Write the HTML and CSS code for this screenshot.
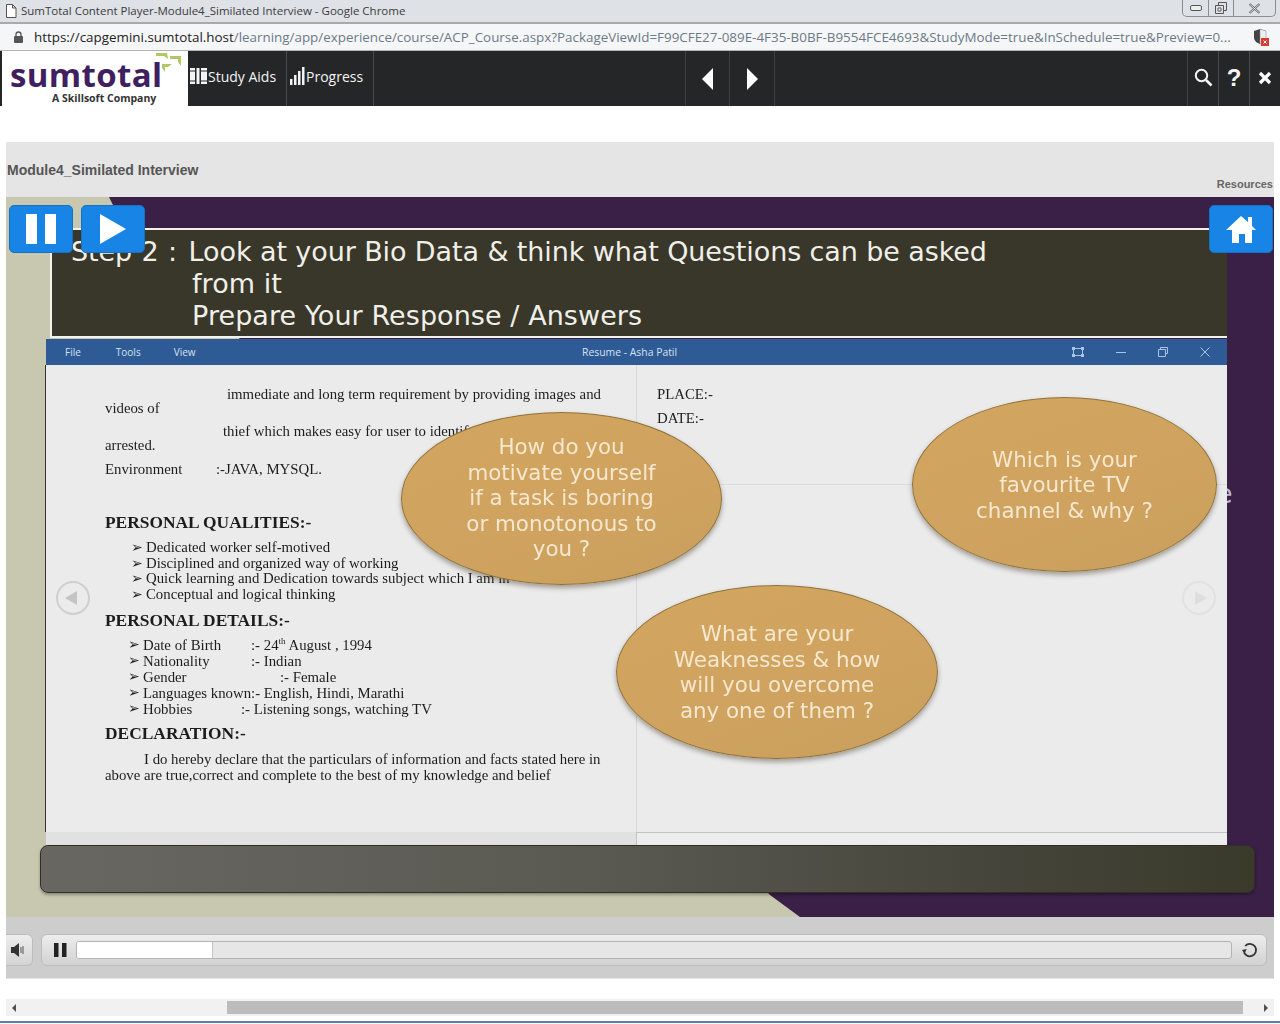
FILE: index.html
```html
<!DOCTYPE html>
<html lang="en">
<head>
  <meta charset="UTF-8">
  <title>SumTotal Content Player-Module4_Similated Interview</title>
  <link rel="stylesheet" href="styles.css">
</head>
<body>
  <div class="titlebar">
    <svg class="page-icon" width="12" height="14" viewBox="0 0 12 14"><path d="M1.500.5h6l3.500 3.500v9.500h-9.500z M7.500.5v3.500h3.500" fill="#fff" stroke="#555"/></svg>
    <span class="titlebar-text">SumTotal Content Player-Module4_Similated Interview - Google Chrome</span>
    <div class="win-buttons">
      <span class="win-btn win-min"><svg width="12" height="6" viewBox="0 0 12 6"><rect x=".5" y=".5" width="11" height="5" rx="1.500" fill="#eee" stroke="#555"/></svg></span>
      <span class="win-btn win-max"><svg width="12" height="12" viewBox="0 0 12 12"><path d="M3.500.5h8v8h-8z" fill="none" stroke="#555"/><path d="M.5 3.500h8v8h-8z" fill="#dee1e6" stroke="#555"/><path d="M3 6h3v3h-3z" fill="#fff" stroke="#555"/></svg></span>
      <span class="win-btn win-close"><svg width="13" height="11" viewBox="0 0 13 11"><path d="M1.500 1l10 9M11.500 1l-10 9" stroke="#666" stroke-width="2.200" fill="none"/><path d="M1.500 1l10 9M11.500 1l-10 9" stroke="#f2f2f2" stroke-width=".8" fill="none"/></svg></span>
    </div>
  </div>

  <div class="addressbar">
    <svg class="lock" width="9" height="12" viewBox="0 0 9 12"><path d="M2 5V3.500a2.500 2.500 0 0 1 5 0V5" fill="none" stroke="#555" stroke-width="1.300"/><rect y="5" width="9" height="7" rx="1" fill="#555"/></svg>
    <span class="url"><span class="url-host">https://capgemini.sumtotal.host</span>/learning/app/experience/course/ACP_Course.aspx?PackageViewId=F99CFE27-089E-4F35-B0BF-B9554FCE4693&amp;StudyMode=true&amp;InSchedule=true&amp;Preview=0...</span>
    <svg class="shield" width="16" height="18" viewBox="0 0 16 18"><path d="M1 3l6-2 6 2v6c0 4-3 6-6 7-3-1-6-3-6-7z" fill="#444"/><path d="M7 1l6 2v6c0 4-3 6-6 7z" fill="#eee" stroke="#888" stroke-width=".5"/><rect x="8" y="10" width="8" height="8" fill="#d93a32"/><path d="M10.500 12.500l3 3M13.500 12.500l-3 3" stroke="#fff"/></svg>
  </div>

  <nav class="topnav">
    <div class="logo">
      <div class="logo-name">sumtotal</div>
      <svg class="logo-mark" width="28" height="20" viewBox="0 0 28 20"><path d="M1 0h11l1 6-4-3H1zM15 3h11v10l-3-4V6h-8zM7 11h10l-4 3h-3v5l-3-4z" fill="#b0c965"/></svg>
      <div class="logo-sub">A Skillsoft Company</div>
    </div>
    <a class="nav-item nav-study">
      <svg width="18" height="18" viewBox="0 0 18 18"><path d="M0 1h5v16H0zM6.500 1h3v16h-3zM11 1h6v16h-6z" fill="#f4f4f4"/><path d="M0 4h5M0 14h5M11 4h6M11 14h6" stroke="#252628"/></svg>
      Study Aids
    </a>
    <a class="nav-item nav-progress">
      <svg width="15" height="18" viewBox="0 0 15 18"><path d="M0 12h2.500v6H0zM4 8h2.500v10H4zM8 4h2.500v14H8zM12 0h2.500v18H12z" fill="#f4f4f4"/></svg>
      Progress
    </a>
    <div class="nav-spacer"></div>
    <a class="nav-arrow nav-arrow-first"><svg width="12" height="22" viewBox="0 0 12 22"><path d="M11 0v22L0 11z" fill="#fff"/></svg></a>
    <a class="nav-arrow"><svg width="12" height="22" viewBox="0 0 12 22"><path d="M1 0v22l11-11z" fill="#fff"/></svg></a>
    <div class="nav-spacer nav-spacer-right"></div>
    <a class="nav-tool"><svg width="19" height="19" viewBox="0 0 19 19"><circle cx="7.500" cy="7.500" r="5.700" fill="none" stroke="#f4f4f4" stroke-width="2"/><path d="M12 12l5.500 5.500" stroke="#f4f4f4" stroke-width="2.600"/></svg></a>
    <a class="nav-tool nav-help">?</a>
    <a class="nav-tool"><svg width="14" height="14" viewBox="0 0 14 14"><path d="M2 2l10 10M12 2L2 12" stroke="#fff" stroke-width="3.200"/></svg></a>
  </nav>

  <main class="player">
    <header class="module-head">
      <h1 class="module-title">Module4_Similated Interview</h1>
      <a class="resources">Resources</a>
    </header>

    <section class="slide">
      <div class="slide-beige"></div>

      <a class="blue-btn btn-pause"><svg width="32" height="30" viewBox="0 0 32 30"><path d="M1 0h11v30H1zM20 0h11v30H20z" fill="#fff"/></svg></a>
      <a class="blue-btn btn-play"><svg width="26" height="30" viewBox="0 0 26 30"><path d="M0 0l26 15L0 30z" fill="#fff"/></svg></a>
      <a class="blue-btn btn-home"><svg width="30" height="27" viewBox="0 0 30 27"><path d="M15 0l7 6V1h4v9l4 4h-4v13h-7v-9h-6v9H6V14H0z" fill="#fff"/></svg></a>

      <div class="step-panel">
        <p class="step-line step-first"><span class="step-no">Step 2 :</span> Look at your Bio Data &amp; think what Questions can be asked</p>
        <p class="step-line step-indent">from it</p>
        <p class="step-line step-indent">Prepare Your Response / Answers</p>
      </div>

      <div class="resume-window">
        <div class="resume-bar">
          <div class="resume-menu"><span>File</span><span>Tools</span><span>View</span></div>
          <div class="resume-title">Resume - Asha Patil</div>
          <div class="resume-ctrls">
            <svg width="12" height="10" viewBox="0 0 12 10"><path d="M1.500 1.500h9v7h-9z" fill="none" stroke="#a9c4e6"/><path d="M0 0h3v3H0zM9 0h3v3H9zM0 7h3v3H0zM9 7h3v3H9z" fill="#a9c4e6"/></svg>
            <svg width="10" height="10" viewBox="0 0 10 10"><path d="M0 5.500h10" stroke="#a9c4e6"/></svg>
            <svg width="10" height="10" viewBox="0 0 10 10"><path d="M2.500 2V.5h7v6H8M.5 2.500h7v7h-7z" fill="none" stroke="#a9c4e6"/></svg>
            <svg width="10" height="10" viewBox="0 0 10 10"><path d="M.5.5l9 9M9.500.5l-9 9" stroke="#a9c4e6"/></svg>
          </div>
        </div>

        <div class="resume-body">
          <div class="resume-left">
            <p class="rline rline-first indent-122">immediate and long term requirement by providing images and</p>
            <p class="rline">videos of</p>
            <p class="rline gap-9 indent-118">thief which makes easy for user to identify</p>
            <p class="rline">arrested.</p>
            <p class="rline gap-10"><span class="tab-111">Environment</span>:-JAVA, MYSQL.</p>
            <h3 class="rhead gap-quality">PERSONAL QUALITIES:-</h3>
            <ul class="rlist rlist-wide gap-list1">
              <li>Dedicated worker self-motived</li>
              <li>Disciplined and organized way of working</li>
              <li>Quick learning and Dedication towards subject which I am in</li>
              <li>Conceptual and logical thinking</li>
            </ul>
            <h3 class="rhead gap-details">PERSONAL DETAILS:-</h3>
            <ul class="rlist gap-list2">
              <li><span class="tab-108">Date of Birth</span>:- 24<sup>th</sup> August , 1994</li>
              <li><span class="tab-108">Nationality</span>:- Indian</li>
              <li><span class="tab-137">Gender</span>:- Female</li>
              <li>Languages known:- English, Hindi, Marathi</li>
              <li><span class="tab-98">Hobbies</span>:- Listening songs, watching TV</li>
            </ul>
            <h3 class="rhead gap-declare">DECLARATION:-</h3>
            <p class="rline gap-declare-text indent-39">I do hereby declare that the particulars of information and facts stated here in</p>
            <p class="rline gap-last">above are true,correct and complete to the best of my knowledge and belief</p>
          </div>
          <div class="resume-right">
            <p class="rline rline-first">PLACE:-</p>
            <p class="rline gap-date">DATE:-</p>
            <div class="right-rule"></div>
          </div>

          <a class="page-arrow page-prev"><svg width="12" height="14" viewBox="0 0 12 14"><path d="M12 0v14L0 7z" fill="#c4c4c4"/></svg></a>
          <a class="page-arrow page-next"><svg width="12" height="14" viewBox="0 0 12 14"><path d="M0 0v14l12-7z" fill="#dedede"/></svg></a>
        </div>
        <div class="resume-foot"><div class="foot-left"></div><div class="foot-right"></div></div>

        <div class="bubble bubble-motivate">How do you<br>motivate yourself<br>if a task is boring<br>or monotonous to<br>you ?</div>
        <div class="bubble bubble-tv">Which is your<br>favourite TV<br>channel &amp; why ?</div>
        <div class="bubble bubble-weak">What are your<br>Weaknesses &amp; how<br>will you overcome<br>any one of them ?</div>
        <div class="stray"><span>e</span></div>
      </div>

      <div class="caption-bar"></div>
    </section>

    <div class="controls">
      <a class="ctrl-volume"><svg width="13" height="14" viewBox="0 0 13 14"><path d="M0 4h3l5-4v14l-5-4H0z" fill="#333"/><path d="M10 4v6M12 3v8" stroke="#555"/></svg></a>
      <div class="ctrl-main">
        <svg class="ctrl-pause" width="13" height="14" viewBox="0 0 13 14"><path d="M0 0h4.500v14H0zM8 0h4.500v14H8z" fill="#222"/></svg>
        <div class="track"><div class="track-fill"></div></div>
        <svg class="ctrl-replay" width="16" height="16" viewBox="0 0 16 16"><path d="M3.200 4A6.200 6.200 0 1 1 1.700 8.500" fill="none" stroke="#333" stroke-width="1.800"/><path d="M0 7.500h5L2.500 11z" fill="#333" transform="rotate(-10 2.500 9)"/></svg>
      </div>
    </div>
  </main>

  <div class="hscroll">
    <span class="hscroll-arrow hscroll-left"></span>
    <div class="hscroll-track"><div class="hscroll-thumb"></div></div>
    <span class="hscroll-arrow hscroll-right"></span>
  </div>
  <div class="taskbar-edge"></div>
</body>
</html>
```

FILE: styles.css
```css
html, body {
  margin: 0;
  height: 1024px;
  overflow: hidden;
  background: white;
}

body {
  font-family: "Open Sans", sans-serif;
}

p, h1, h3, ul {
  margin: 0;
  padding: 0;
}

/* browser window */
.titlebar {
  height: 22px;
  background: #dee1e6;
  border-bottom: 2px solid #a9a9a9;
  display: flex;
  align-items: center;
  padding-left: 5px;
  font-size: 11.500px;
  color: #3c3c3c;
}

.titlebar-text {
  margin-left: 4px;
  margin-bottom: 2px;
}

.win-buttons {
  margin-left: auto;
  margin-right: 4px;
  align-self: flex-start;
  display: flex;
  height: 16px;
  border: 1px solid #8a8d91;
  border-top: none;
  border-radius: 0 0 5px 5px;
}

.win-btn {
  display: flex;
  align-items: center;
  justify-content: center;
}

.win-min { width: 25px; border-right: 1px solid #8a8d91; }
.win-max { width: 24px; border-right: 1px solid #8a8d91; }
.win-close { width: 41px; }

.addressbar {
  height: 26px;
  background: #f5f6f7;
  border-bottom: 1px solid #b5b5b5;
  display: flex;
  align-items: center;
  padding-left: 14px;
  font-size: 13.400px;
  color: #6c7a88;
}

.lock, .shield {
  flex-shrink: 0;
}

.url {
  margin-left: 11px;
  padding-bottom: 1px;
  white-space: nowrap;
}

.url-host {
  color: #222;
}

.shield {
  margin-left: auto;
  margin-right: 11px;
}

/* app nav */
.topnav {
  height: 55px;
  background: #252628;
  display: flex;
  color: #f4f4f4;
  font-size: 14px;
}

.logo {
  width: 186px;
  margin-left: 2px;
  background: white;
  position: relative;
}

.logo-name {
  margin: 7px 0 0 8px;
  font-weight: 700;
  font-size: 33px;
  line-height: 34px;
  letter-spacing: 0.350px;
  color: #3f1f5f;
}

.logo-mark {
  position: absolute;
  left: 153px;
  top: 2px;
}

.logo-sub {
  margin-left: 50px;
  font-size: 10.500px;
  line-height: 13px;
  font-weight: 700;
  color: #333;
  white-space: nowrap;
}

.nav-item {
  display: flex;
  align-items: center;
  border-right: 1px solid #4a4b4d;
  padding-bottom: 5px;
  box-sizing: border-box;
}

.nav-study { width: 99px; padding-left: 2px; }
.nav-progress { width: 87px; padding-left: 3px; gap: 1px; }

.nav-spacer {
  width: 311px;
  border-right: 1px solid #3f4044;
}

.nav-spacer-right {
  width: 412px;
  border-right: 1px solid #3f4044;
}

.nav-arrow {
  width: 44px;
  display: flex;
  align-items: center;
  justify-content: center;
  border-right: 1px solid #3f4044;
}

.nav-arrow-first {
  padding-left: 1px;
  box-sizing: border-box;
}

.nav-tool {
  width: 30px;
  display: flex;
  align-items: center;
  justify-content: center;
  border-right: 1px solid #4a4b4d;
  padding-bottom: 2px;
}

.nav-tool:last-child {
  border-right: none;
}

.nav-help {
  font-family: "Liberation Sans", sans-serif;
  font-size: 24px;
  font-weight: 700;
}

/* player */
.player {
  margin: 36px 6px 0;
}

.module-head {
  height: 55px;
  background: #e5e5e5;
  position: relative;
  color: #555;
  font-family: "Liberation Sans", sans-serif;
}

.module-title {
  padding: 20px 0 0 1px;
  font-size: 14px;
  font-weight: 700;
}

.resources {
  position: absolute;
  right: 1px;
  bottom: 7px;
  font-size: 11px;
  font-weight: 700;
  color: #666;
}

.slide {
  height: 720px;
  background: #3a1f47;
  position: relative;
  padding: 31px 47px 0 40px;
  box-sizing: border-box;
}

.slide-beige {
  position: absolute;
  inset: 0;
  background: #c8c7b0;
  clip-path: polygon(0 0, 103px 0, 108px 10px, 764px 698px, 794px 720px, 0 720px);
}

.blue-btn {
  position: absolute;
  top: 8px;
  width: 64px;
  height: 48px;
  background: #1885e6;
  border: 1px solid #1571c4;
  border-radius: 5px;
  box-sizing: border-box;
  display: flex;
  align-items: center;
  justify-content: center;
  z-index: 3;
}

.btn-pause { left: 3px; }
.btn-play { left: 75px; }
.btn-home { right: 1px; }

.step-panel {
  position: relative;
  height: 110px;
  margin-left: 4px;
  box-sizing: border-box;
  background: #38372a;
  border: 2px solid #f2f1ea;
  border-right: none;
  padding: 6px 0 0 19px;
  font-family: "DejaVu Sans", sans-serif;
  font-size: 27px;
  line-height: 32px;
  color: #f0efe8;
  white-space: nowrap;
}

.step-first {
  letter-spacing: -0.100px;
}

.step-no {
  margin-right: 3px;
  word-spacing: 1px;
}

.step-indent {
  padding-left: 121px;
  letter-spacing: 0.070px;
}

.resume-window {
  position: relative;
  height: 506px;
  margin-top: 1px;
  background: #ebebec;
  font-family: "Liberation Serif", serif;
  color: #1c1c1c;
}

.resume-bar {
  height: 26px;
  background: #2e5a96;
  display: flex;
  align-items: center;
  justify-content: space-between;
  position: relative;
  font-family: "Open Sans", sans-serif;
  font-size: 10px;
  color: #d6e2f2;
}

.resume-menu {
  display: flex;
  padding-left: 19px;
  gap: 35px;
}

.resume-menu span:last-child {
  margin-left: -2px;
}

.resume-title {
  position: absolute;
  left: 536px;
  font-size: 10.400px;
}

.resume-ctrls {
  display: flex;
  gap: 32px;
  padding-right: 17px;
  align-items: center;
}

.resume-body {
  height: 467px;
  display: flex;
  position: relative;
  box-shadow: -1px 0 0 #333;
}

.resume-left {
  width: 591px;
  padding-left: 59px;
  border-right: 1px solid #d8d8da;
  white-space: nowrap;
  box-sizing: border-box;
  overflow: hidden;
  filter: blur(0.3px);
}

.resume-right {
  flex: 1;
  padding-left: 20px;
  filter: blur(0.3px);
}

.right-rule {
  height: 1px;
  margin: 59px 0 0 -20px;
  background: #dcdcde;
}

.rline {
  font-size: 14.800px;
  line-height: 14px;
}

.rline-first { margin-top: 22px; }
.gap-9 { margin-top: 9px; }
.gap-10 { margin-top: 10px; }
.gap-date { margin-top: 10px; }
.gap-last { margin-top: 2px; }
.indent-122 { padding-left: 122px; }
.indent-118 { padding-left: 118px; }
.indent-39 { padding-left: 39px; }

.rhead {
  font-size: 17.400px;
  line-height: 18px;
  font-weight: 700;
}

.gap-quality { margin-top: 37px; }
.gap-details { margin-top: 8px; }
.gap-declare { margin-top: 7px; }
.gap-declare-text { margin-top: 10px; }
.gap-list1 { margin-top: 9px; }
.gap-list2 { margin-top: 8px; }

.rlist {
  list-style: none;
  padding-left: 38px;
  font-size: 14.800px;
  line-height: 16px;
}

.rlist-wide {
  padding-left: 41px;
  line-height: 15.700px;
}

.rlist li {
  position: relative;
}

.rlist li::before {
  content: "➢";
  position: absolute;
  left: -15px;
  font-size: 14px;
}

.rlist sup {
  font-size: 9px;
  line-height: 0;
}

.tab-111, .tab-108, .tab-137, .tab-98 {
  display: inline-block;
}

.tab-111 { width: 111px; }
.tab-108 { width: 108px; }
.tab-137 { width: 137px; }
.tab-98 { width: 98px; }

.page-arrow {
  position: absolute;
  top: 216px;
  width: 34px;
  height: 34px;
  box-sizing: border-box;
  border-radius: 50%;
  border: 2px solid #cfcfcf;
  display: flex;
  align-items: center;
  justify-content: center;
}

.page-prev { left: 10px; }
.page-prev svg { margin-right: 4px; }
.page-next { right: 11px; border-color: #e2e2e2; }
.page-next svg { margin-left: 4px; }

.resume-foot {
  height: 13px;
  display: flex;
}

.foot-left {
  width: 590px;
  background: #e1e1e2;
}

.foot-right {
  flex: 1;
  background: #ededee;
  border-top: 1px solid #c2c2c2;
  border-left: 1px solid #c2c2c2;
}

.bubble {
  position: absolute;
  border-radius: 50%;
  background: linear-gradient(160deg, #d2a660 0%, #cfa35f 60%, #c99d5c 100%);
  border: 1px solid #8f7238;
  box-sizing: border-box;
  box-shadow: 0 3px 5px rgba(70, 60, 40, 0.45);
  display: flex;
  align-items: center;
  justify-content: center;
  text-align: center;
  font-family: "DejaVu Sans", sans-serif;
  font-size: 21.400px;
  line-height: 25.500px;
  color: #f6e7cf;
  filter: blur(0.2px);
}

.bubble-motivate { left: 355px; top: 73px; width: 321px; height: 173px; padding-bottom: 1px; }
.bubble-tv { left: 866px; top: 58px; width: 305px; height: 175px; padding-top: 1px; }
.bubble-weak { left: 570px; top: 246px; width: 322px; height: 174px; }

.stray {
  position: absolute;
  left: 1181px;
  top: 139px;
  width: 5px;
  height: 32px;
  overflow: hidden;
  font-family: "DejaVu Sans", sans-serif;
  font-size: 27px;
  line-height: 32px;
  color: #b8bccc;
}

.stray span {
  display: block;
  margin-left: -11px;
}

.caption-bar {
  position: relative;
  height: 48px;
  margin: 0 -28px 0 -6px;
  box-sizing: border-box;
  border: 1px solid #2f2f28;
  border-radius: 8px;
  background: linear-gradient(90deg, #686762 0%, #5a5a53 45%, #44443a 80%, #3a3a2b 100%);
  box-shadow: 0 2px 3px rgba(0, 0, 0, 0.3);
}

/* video controls */
.controls {
  height: 62px;
  background: #cdcdcd;
  border-bottom: 1px solid #e3e3e3;
  box-sizing: border-box;
  display: flex;
  align-items: flex-start;
  padding-top: 17px;
}

.ctrl-volume {
  width: 27px;
  height: 32px;
  box-sizing: border-box;
  background: linear-gradient(#ededed, #d4d4d4);
  border: 1px solid #bdbdbd;
  border-left: none;
  border-radius: 0 6px 6px 0;
  display: flex;
  align-items: center;
  padding-left: 5px;
}

.ctrl-main {
  width: 1226px;
  height: 32px;
  margin-left: 8px;
  box-sizing: border-box;
  background: linear-gradient(#ededed, #d2d2d2);
  border: 1px solid #bdbdbd;
  border-radius: 6px;
  display: flex;
  align-items: center;
}

.ctrl-pause {
  margin-left: 12px;
}

.track {
  width: 1156px;
  height: 18px;
  margin-left: 9px;
  box-sizing: border-box;
  background: #e6e6e6;
  border: 1px solid #b3b3b3;
  border-radius: 3px;
  overflow: hidden;
}

.track-fill {
  width: 135px;
  height: 100%;
  background: white;
  border-right: 1px solid #c4c4c4;
}

.ctrl-replay {
  margin-left: 10px;
}

/* page scrollbar */
.hscroll {
  height: 17px;
  margin: 20px 6px 0;
  background: #f1f1f1;
  display: flex;
  align-items: center;
}

.hscroll-track {
  flex: 1;
  height: 13px;
  padding-left: 211px;
  padding-right: 21px;
}

.hscroll-thumb {
  height: 100%;
  background: #bcbcbc;
}

.hscroll-arrow {
  width: 0;
  height: 0;
  border-top: 4px solid transparent;
  border-bottom: 4px solid transparent;
}

.hscroll-left {
  margin-left: 6px;
  border-right: 4px solid #505050;
}

.hscroll-right {
  margin-right: 6px;
  border-left: 4px solid #505050;
}

.taskbar-edge {
  height: 2px;
  margin-top: 5px;
  background: #5d7fa3;
}
```
